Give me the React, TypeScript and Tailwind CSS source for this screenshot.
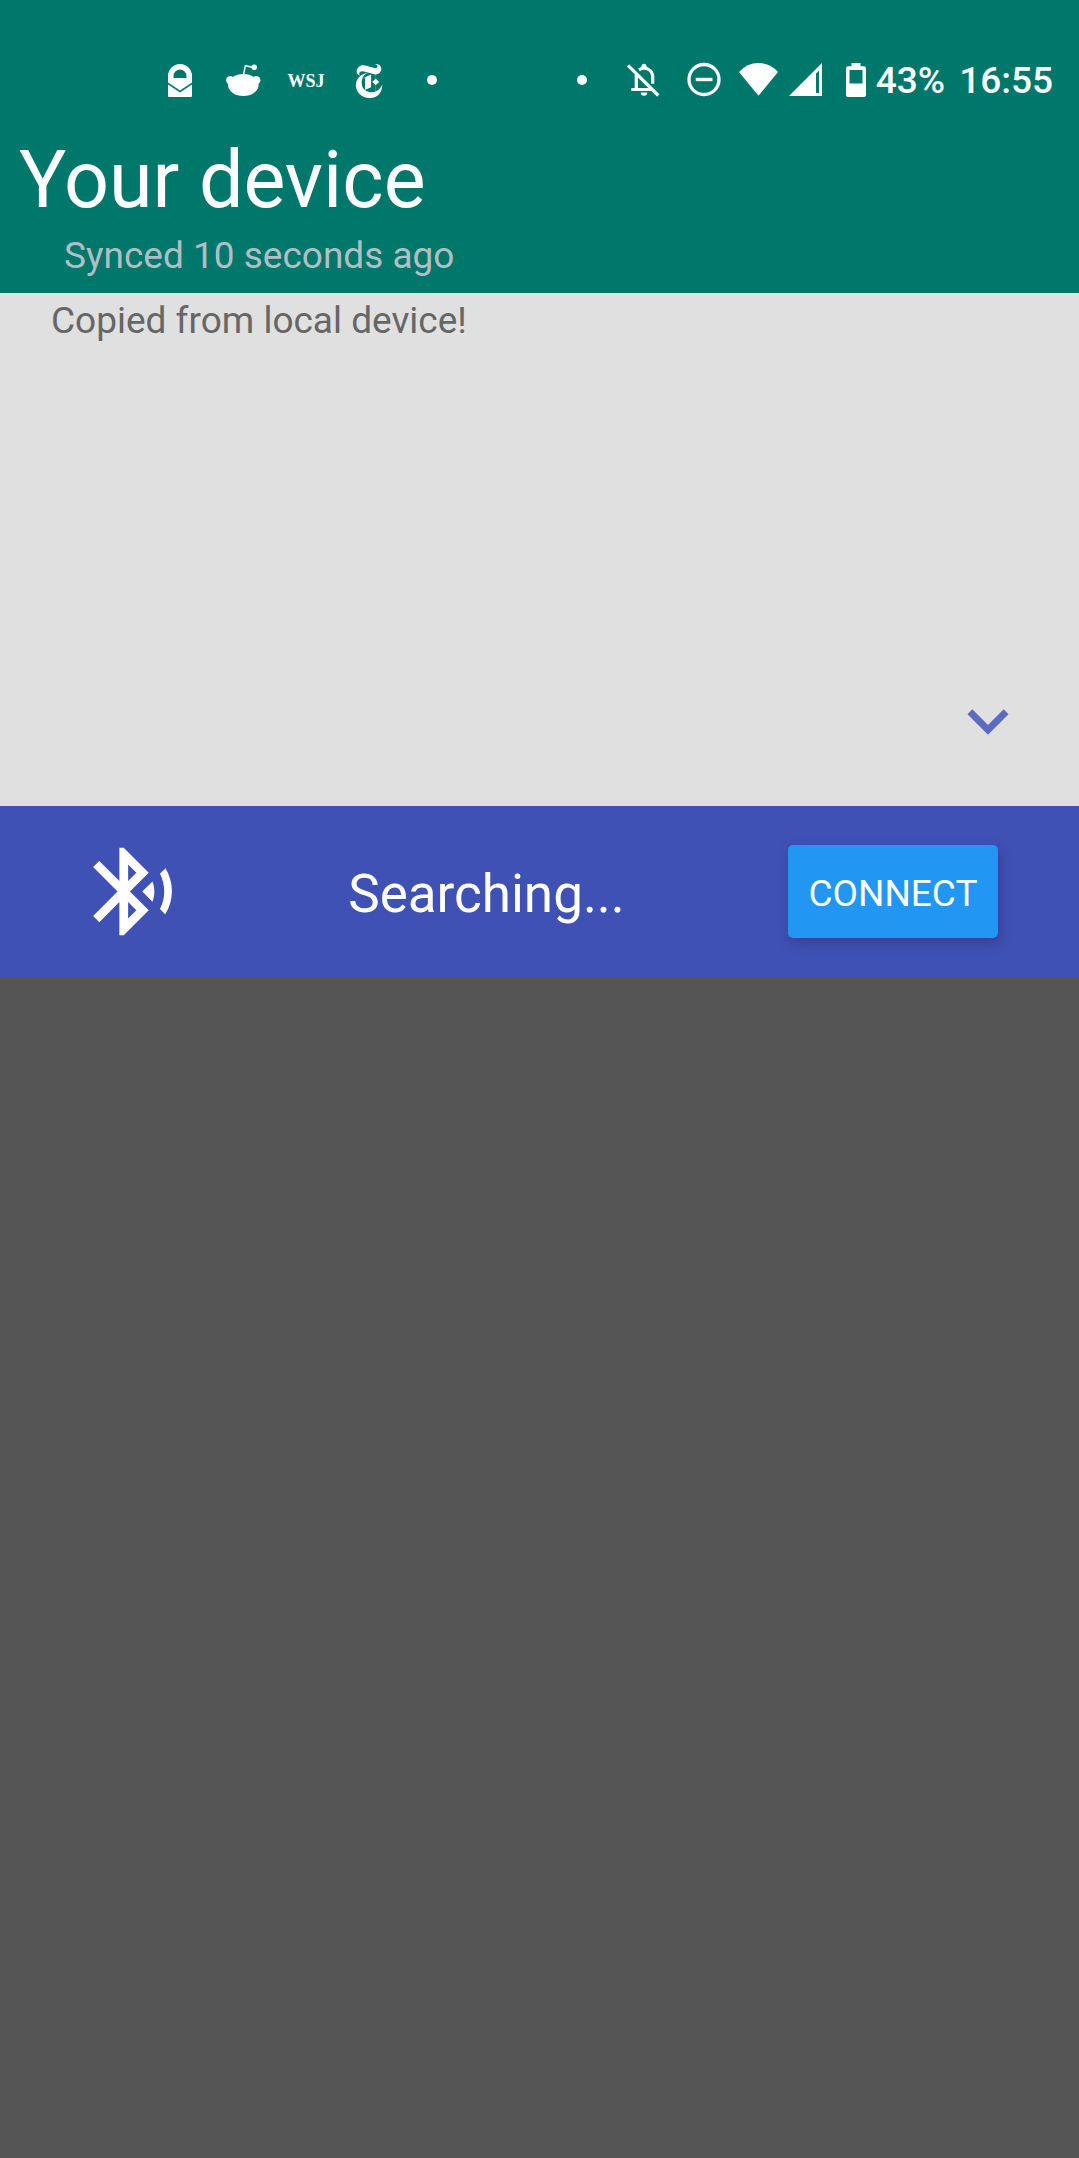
import type { ReactNode } from "react";
import { MdBluetoothSearching, MdExpandMore } from "react-icons/md";
import { SiNewyorktimes } from "react-icons/si";

function Glyph({ label, children }: { label: string; children: ReactNode }) {
  return (
    <svg role="img" aria-label={label} viewBox="0 0 40 40" className="size-10 shrink-0" fill="currentColor">
      {children}
    </svg>
  );
}

function Dot() {
  return (
    <Glyph label="More">
      <circle cx="20" cy="19" r="5" />
    </Glyph>
  );
}

function StatusBar() {
  return (
    <div className="flex h-11 items-center justify-between pr-[26px] pl-40 text-[37px] leading-[44px] font-medium">
      <div className="flex items-center gap-[23px]">
        <Glyph label="Secure mail">
          <path
            fillRule="evenodd"
            d="M8 21.5V15a12 12 0 0 1 24 0v6.5l-12 8zM13.5 17h13v-2a6.5 6.5 0 0 0-13 0z"
          />
          <path d="M8 23.5l12 8 12-8V35q0 1-1 1H9q-1 0-1-1z" />
        </Glyph>
        <Glyph label="Reddit">
          <ellipse cx="20.3" cy="24" rx="15.3" ry="11" />
          <circle cx="7.3" cy="19.3" r="4.2" />
          <circle cx="33.2" cy="19.3" r="4.2" />
          <path d="M20.4 14l2-9.3 7 1.5" fill="none" stroke="currentColor" strokeWidth="1.4" />
          <circle cx="31.2" cy="6.2" r="2.8" />
        </Glyph>
        <Glyph label="WSJ">
          <text x="20" y="26" textAnchor="middle" fontSize="18" className="font-['Liberation_Serif',serif] font-bold">
            WSJ
          </text>
        </Glyph>
        <span className="flex size-10 items-center justify-center">
          <SiNewyorktimes className="size-[34px]" aria-label="The New York Times" />
        </span>
        <Dot />
      </div>
      <div className="flex items-center">
        <div className="mr-[15px] flex gap-[21px]">
          <Dot />
          <Glyph label="Silent">
            <g fill="none" stroke="currentColor" strokeWidth="3.2">
              <path d="M5 4.3l30.3 30.2" />
              <path d="M13.3 13.5v15M8.3 28.5h20M16 8.8c6-3.600 13.500-.6 13.700 7v7" />
            </g>
            <path d="M18.5 7V5.2a2.5 2.5 0 0 1 5 0V7zM17.8 31.5h6.4a3.2 3.2 0 0 1-6.4 0z" />
          </Glyph>
          <Glyph label="Do not disturb">
            <circle cx="20" cy="18.5" r="15" fill="none" stroke="currentColor" strokeWidth="3.3" />
            <path d="M11.7 16.8h16.8v3.4H11.7z" />
          </Glyph>
        </div>
        <Glyph label="Wi-Fi">
          <path d="M0 11Q8 2 19.5 2T39 11L19.5 34.8z" />
        </Glyph>
        <svg role="img" aria-label="Signal" viewBox="0 0 34 40" className="ml-[10px] h-10 w-[34px]" fill="currentColor">
          <path fillRule="evenodd" d="M0 35H33V2zM27 32V12.500l3-2.800V32z" />
        </svg>
        <svg role="img" aria-label="Battery" viewBox="0 0 20 40" className="mr-[10px] ml-[23px] h-10 w-5" fill="currentColor">
          <path
            fillRule="evenodd"
            d="M5.500 2h9v3.300H18a2 2 0 0 1 2 2V34a2 2 0 0 1-2 2H2a2 2 0 0 1-2-2V7.300a2 2 0 0 1 2-2h3.500zM3.500 9v13.500h13V9z"
          />
        </svg>
        <span>43%</span>
        <time className="ml-[14px]">16:55</time>
      </div>
    </div>
  );
}

export default function App() {
  return (
    <div className="flex min-h-screen flex-col bg-[#555555] font-[Roboto,sans-serif] text-white">
      <header className="bg-[#00776b] pt-[59px] pb-[15px]">
        <StatusBar />
        <h1 className="mt-[31px] pl-[19px] text-[79px] leading-[92px]">Your device</h1>
        <p className="mt-2 pl-16 text-[37px] leading-[44px] text-[#b0bec5]">Synced 10 seconds ago</p>
      </header>

      <main>
        <section className="flex min-h-[513px] flex-col justify-between bg-[#e0e0e0] pt-[6px] pb-11">
          <p className="pl-[51px] text-[37px] leading-[44px] text-[#666666]">Copied from local device!</p>
          <button type="button" aria-label="Expand" className="mr-[50px] self-end text-[#5c6bc0]">
            <MdExpandMore className="size-[82px]" />
          </button>
        </section>

        <section className="flex min-h-[171px] items-center bg-[#3f51b5] pr-[81px] pl-20">
          <MdBluetoothSearching className="size-[105px] shrink-0" aria-hidden="true" />
          <p className="flex-1 pt-1 text-center text-[53px] leading-[62px]">Searching...</p>
          <button
            type="button"
            className="h-[93px] w-[210px] rounded-[5px] bg-[#2196f3] pt-1 text-[37px] leading-[44px] shadow-[2px_5px_12px_rgba(50,40,90,0.4)]"
          >
            CONNECT
          </button>
        </section>
      </main>
    </div>
  );
}
